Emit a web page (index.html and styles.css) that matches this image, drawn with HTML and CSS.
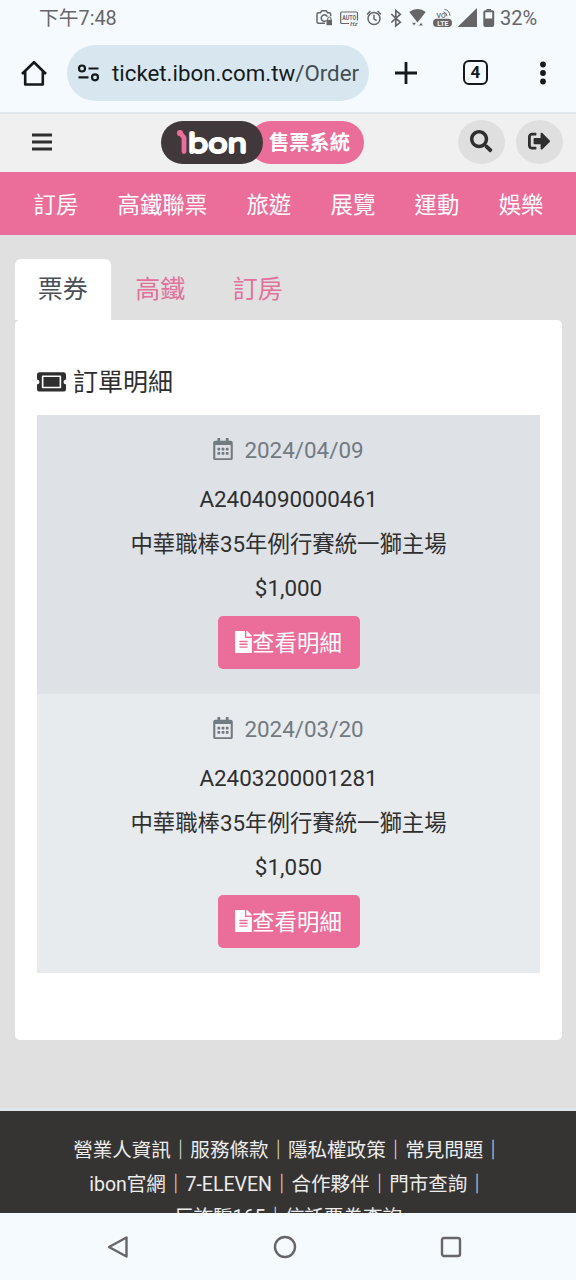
FILE: index.html
```html
<!DOCTYPE html>
<html lang="zh-Hant">
<head>
<meta charset="utf-8">
<title>ibon售票系統</title>
<link rel="stylesheet" href="styles.css">
</head>
<body>
<svg class="sprite" aria-hidden="true">
  <symbol id="calendar" viewBox="0 0 448 512"><path d="M148 288h-40c-6.600 0-12-5.400-12-12v-40c0-6.600 5.400-12 12-12h40c6.600 0 12 5.400 12 12v40c0 6.600-5.400 12-12 12zm108-12v-40c0-6.600-5.400-12-12-12h-40c-6.600 0-12 5.400-12 12v40c0 6.600 5.400 12 12 12h40c6.600 0 12-5.400 12-12zm96 0v-40c0-6.600-5.400-12-12-12h-40c-6.600 0-12 5.400-12 12v40c0 6.600 5.400 12 12 12h40c6.600 0 12-5.400 12-12zm-96 96v-40c0-6.600-5.400-12-12-12h-40c-6.600 0-12 5.400-12 12v40c0 6.600 5.400 12 12 12h40c6.600 0 12-5.400 12-12zm-96 0v-40c0-6.600-5.400-12-12-12h-40c-6.600 0-12 5.400-12 12v40c0 6.600 5.400 12 12 12h40c6.600 0 12-5.400 12-12zm192 0v-40c0-6.600-5.400-12-12-12h-40c-6.600 0-12 5.400-12 12v40c0 6.600 5.400 12 12 12h40c6.600 0 12-5.400 12-12zm96-260v352c0 26.500-21.500 48-48 48H48c-26.500 0-48-21.500-48-48V112c0-26.500 21.500-48 48-48h48V12c0-6.600 5.400-12 12-12h40c6.600 0 12 5.400 12 12v52h128V12c0-6.600 5.400-12 12-12h40c6.600 0 12 5.400 12 12v52h48c26.500 0 48 21.500 48 48zm-48 346V160H48v298c0 3.300 2.700 6 6 6h340c3.300 0 6-2.700 6-6z"/></symbol>
  <symbol id="file" viewBox="0 0 384 512"><path d="M224 136V0H24C10.700 0 0 10.700 0 24v464c0 13.300 10.700 24 24 24h336c13.300 0 24-10.700 24-24V160H248c-13.200 0-24-10.800-24-24zm64 236c0 6.600-5.400 12-12 12H108c-6.600 0-12-5.400-12-12v-8c0-6.600 5.400-12 12-12h168c6.600 0 12 5.400 12 12v8zm0-64c0 6.600-5.400 12-12 12H108c-6.600 0-12-5.400-12-12v-8c0-6.600 5.400-12 12-12h168c6.600 0 12 5.400 12 12v8zm0-72v8c0 6.600-5.400 12-12 12H108c-6.600 0-12-5.400-12-12v-8c0-6.600 5.400-12 12-12h168c6.600 0 12 5.400 12 12zm96-114.100v6.100H256V0h6.100c6.400 0 12.500 2.500 17 7l97.900 98c4.500 4.500 7 10.600 7 16.900z"/></symbol>
</svg>

<div class="status-bar">
  <span class="clock">下午7:48</span>
  <svg class="status-icons" viewBox="312 0 184 34" width="184" height="34" fill="none" stroke="#666" stroke-width="1.500">
    <path d="M325 22.300h-6.500a1.500 1.500 0 0 1-1.500-1.500v-7.600a1.500 1.500 0 0 1 1.500-1.500h2l1.300-2h4.400l1.300 2h1.700a1.500 1.500 0 0 1 1.500 1.500v2"/>
    <path d="M326.500 19.500a3.200 3.200 0 1 1 .8-3.800"/>
    <rect x="326.500" y="18.800" width="5.500" height="5.400" fill="#666" stroke="none"/>
    <path d="M327.600 19v-1.200a1.700 1.700 0 0 1 3.400 0V19" stroke-width="1"/>
    <path d="M349 22.500h-7.300a1 1 0 0 1-1-1V12a1 1 0 0 1 1-1h14.800a1 1 0 0 1 1 1v7.500" stroke-width="1.200"/>
    <g fill="#666" stroke="none" font-family="Roboto, sans-serif" font-weight="700">
      <text x="342.300" y="19" font-size="6.500" textLength="13.800" lengthAdjust="spacingAndGlyphs">AUTO</text>
      <text x="350.300" y="25.300" font-size="6" font-style="italic">Hz</text>
    </g>
    <circle cx="374" cy="17.500" r="6"/>
    <path d="M374 13.800v4l2.600 1.900M367 13.500l3.400-3.400M381 13.500l-3.400-3.400"/>
    <path d="M391.300 13l9 8.300-4.500 3.700V9.500l4.500 3.700-9 8.300" stroke-width="1.700"/>
    <path d="M409.300 11a12.500 12.500 0 0 1 16.400 0L417.500 21.500z" fill="#666" stroke="none"/>
    <path d="M411.500 21.500h5l-2.500 3.300zM418.500 24.800h5l-2.500-3.300z" fill="#666" stroke="#f5faff" stroke-width=".6"/>
    <rect x="433" y="17.800" width="19" height="8.200" rx="4" fill="#666" stroke="none"/>
    <g stroke="none" font-family="Roboto, sans-serif" font-weight="700">
      <text x="436.500" y="16.500" font-size="7" fill="#666" font-weight="500">VO</text>
      <text x="437.300" y="24.500" font-size="7" textLength="11" lengthAdjust="spacingAndGlyphs" fill="#f5faff">LTE</text>
    </g>
    <path d="M443.500 11a4.500 4.500 0 0 1 3.500 4.300M444.500 8.300a7 7 0 0 1 5.500 6.500" stroke-width="1"/>
    <path d="M477 7v19h-19.500z" fill="#666" stroke="none"/>
    <path d="M486.500 8h4.500v1.500h-4.500z" fill="#666" stroke="none"/>
    <path d="M485.300 10.300h6.900a1 1 0 0 1 1 1V24a1 1 0 0 1-1 1h-6.900a1 1 0 0 1-1-1V11.300a1 1 0 0 1 1-1z" stroke-width="2"/>
    <rect x="484" y="17.500" width="9.500" height="7.500" fill="#666" stroke="none"/>
  </svg>
  <span class="battery">32%</span>
</div>

<div class="browser-bar">
  <svg class="home" viewBox="0 0 28 28" width="28" height="28" fill="none" stroke="#15191c" stroke-width="2.600" stroke-linejoin="round"><path d="M2 15L14 3.200 26 15M5.200 12.500v13h17.600v-13"/></svg>
  <div class="address">
    <svg viewBox="0 0 24 20" width="24" height="20" fill="none" stroke="#15191c" stroke-width="2.200"><circle cx="5" cy="5.500" r="3"/><circle cx="18" cy="14.300" r="3"/><path d="M11.500 5.500h10M1.500 14.300h10"/></svg>
    <span class="url">ticket.ibon.com.tw<span class="path">/Order</span></span>
  </div>
  <svg class="plus" viewBox="0 0 24 24" width="24" height="24" stroke="#15191c" stroke-width="2.800"><path d="M12 1v22M1 12h22"/></svg>
  <span class="tab-count">4</span>
  <svg class="dots" viewBox="0 0 8 24" width="8" height="24" fill="#15191c"><circle cx="4" cy="3.500" r="2.900"/><circle cx="4" cy="12" r="2.900"/><circle cx="4" cy="20.500" r="2.900"/></svg>
</div>

<header class="site-header">
  <svg class="menu" viewBox="0 0 20 18" width="20" height="18" fill="#2f2f2f"><path d="M0 .5h20v3H0zM0 7.500h20v3H0zM0 14.500h20v3H0z"/></svg>
  <div class="logo">
    <div class="logo-name" aria-label="ibon">
      <svg viewBox="0 0 72 30" width="72" height="30">
        <circle cx="5" cy="5" r="3.100" fill="#eb6d99"/>
        <path d="M5 5L9 9.500V23.500" fill="none" stroke="#eb6d99" stroke-width="4.800" stroke-linecap="round" stroke-linejoin="bevel"/>
        <text x="13" y="25" textLength="59" lengthAdjust="spacingAndGlyphs" class="logo-text">bon</text>
      </svg>
    </div>
    <div class="logo-system">售票系統</div>
  </div>
  <div class="actions">
    <span class="round"><svg viewBox="0 0 512 512" width="22.400" height="22.400" fill="#2f2f2f"><path d="M505 442.700L405.300 343c-4.500-4.500-10.600-7-17-7H372c27.600-35.300 44-79.700 44-128C416 93.100 322.900 0 208 0S0 93.100 0 208s93.100 208 208 208c48.300 0 92.700-16.400 128-44v16.300c0 6.400 2.500 12.500 7 17l99.700 99.700c9.400 9.400 24.600 9.400 33.900 0l28.300-28.300c9.400-9.400 9.400-24.600.1-34zM208 336c-70.700 0-128-57.200-128-128 0-70.700 57.200-128 128-128 70.700 0 128 57.200 128 128 0 70.700-57.200 128-128 128z"/></svg></span>
    <span class="round"><svg viewBox="0 0 512 512" width="22.400" height="22.400" fill="#2f2f2f"><path d="M497 273L329 441c-15 15-41 4.500-41-17v-96H152c-13.300 0-24-10.700-24-24v-96c0-13.300 10.700-24 24-24h136V88c0-21.400 25.900-32 41-17l168 168c9.300 9.400 9.300 24.600 0 34zM192 436v-40c0-6.600-5.400-12-12-12H96c-17.700 0-32-14.300-32-32V160c0-17.700 14.300-32 32-32h84c6.600 0 12-5.400 12-12V76c0-6.600-5.400-12-12-12H96c-53 0-96 43-96 96v192c0 53 43 96 96 96h84c6.600 0 12-5.400 12-12z"/></svg></span>
  </div>
</header>

<nav class="categories">
  <a>訂房</a><a>高鐵聯票</a><a>旅遊</a><a>展覽</a><a>運動</a><a>娛樂</a>
</nav>

<main class="content">
  <div class="tabs"><a class="tab active">票券</a><a class="tab">高鐵</a><a class="tab">訂房</a></div>
  <section class="panel">
    <h1 class="title">
      <svg viewBox="0 0 576 512" width="29" height="25.800" fill="#2f2f2f"><path d="M128 160h320v192H128V160zm400 96c0 26.510 21.490 48 48 48v96c0 26.510-21.490 48-48 48H48c-26.510 0-48-21.490-48-48v-96c26.510 0 48-21.490 48-48s-21.490-48-48-48v-96c0-26.510 21.490-48 48-48h480c26.510 0 48 21.490 48 48v96c-26.510 0-48 21.490-48 48zm-48-104c0-13.255-10.745-24-24-24H120c-13.255 0-24 10.745-24 24v208c0 13.255 10.745 24 24 24h336c13.255 0 24-10.745 24-24V152z"/></svg>
      訂單明細
    </h1>
    <article class="order first">
      <div class="date"><svg class="calendar"><use href="#calendar"/></svg>2024/04/09</div>
      <div class="line">A2404090000461</div>
      <div class="line">中華職棒35年例行賽統一獅主場</div>
      <div class="line">$1,000</div>
      <a class="button"><svg class="file"><use href="#file"/></svg>查看明細</a>
    </article>
    <article class="order">
      <div class="date"><svg class="calendar"><use href="#calendar"/></svg>2024/03/20</div>
      <div class="line">A2403200001281</div>
      <div class="line">中華職棒35年例行賽統一獅主場</div>
      <div class="line">$1,050</div>
      <a class="button"><svg class="file"><use href="#file"/></svg>查看明細</a>
    </article>
  </section>
</main>

<footer class="site-footer">
  <div>營業人資訊｜服務條款｜隱私權政策｜常見問題｜</div>
  <div>ibon官網｜7-ELEVEN｜合作夥伴｜門市查詢｜</div>
  <div>反詐騙165｜信託票券查詢</div>
</footer>

<div class="system-nav">
  <svg viewBox="0 0 24 24" width="24" height="24" fill="none" stroke="#666" stroke-width="2.400" stroke-linejoin="round"><path d="M20.500 2.500v19L3 12z"/></svg>
  <svg viewBox="0 0 24 24" width="24" height="24" fill="none" stroke="#666" stroke-width="2.400"><circle cx="12" cy="12" r="10"/></svg>
  <svg viewBox="0 0 24 24" width="24" height="24" fill="none" stroke="#666" stroke-width="2.400"><rect x="3" y="3" width="18" height="18" rx="2"/></svg>
</div>
</body>
</html>
```
FILE: styles.css
```css
* { box-sizing: border-box; }

body {
  margin: 0;
  width: 576px;
  height: 1280px;
  display: flex;
  flex-direction: column;
  overflow: hidden;
  background: #e0e0e0;
  color: #2f2f2f;
  font: 22.4px/1.5 Roboto, "Noto Sans CJK TC", sans-serif;
}

svg { display: block; flex: none; }
.sprite { position: absolute; width: 0; height: 0; }

.status-bar {
  flex: none;
  height: 35px;
  padding-left: 39px;
  display: flex;
  align-items: center;
  background: #f5faff;
  color: #666;
  font-size: 19.8px;
}
.clock { width: 273px; padding-top: 2px; }
.battery { margin-left: 4px; font-size: 20px; }

.browser-bar {
  flex: none;
  height: 77px;
  padding: 0 0 2px 20px;
  display: flex;
  align-items: center;
  background: #f5faff;
}
.address {
  width: 302px;
  height: 56px;
  margin-left: 19px;
  padding-left: 10px;
  display: flex;
  align-items: center;
  border-radius: 28px;
  background: #d8e7ef;
}
.url {
  margin-left: 11px;
  padding-top: 3px;
  white-space: nowrap;
  color: #15191c;
  font-size: 22.3px;
}
.path { color: #444e54; }
.plus { margin-left: 24.500px; }
.tab-count {
  width: 25px;
  height: 25px;
  margin-left: 45.500px;
  border: 2.500px solid #15191c;
  border-radius: 6px;
  color: #15191c;
  font-size: 17px;
  font-weight: 700;
  line-height: 21px;
  text-align: center;
}
.dots { margin-left: 50.500px; }

.site-header {
  flex: none;
  height: 60px;
  padding: 0 13px 0 32px;
  display: flex;
  align-items: center;
  border-top: 2px solid #dfe6ec;
  background: #f0f0f0;
}
.menu { margin-top: -3px; }
.logo { display: flex; margin: -1px 0 0 109px; }
.logo-name {
  z-index: 1;
  width: 102px;
  height: 43px;
  padding: 7px 0 0 14px;
  border-radius: 22px;
  background: #40383a;
}
.logo-text {
  font: 700 29px "Varela Round", Lato, sans-serif;
  fill: #fff;
  stroke: #fff;
  stroke-width: 1.2px;
  stroke-linejoin: round;
}
.logo-system {
  width: 115px;
  height: 43px;
  margin-left: -14px;
  padding-left: 20px;
  border-radius: 22px;
  background: #eb6d99;
  color: #fff;
  font-size: 20.3px;
  font-weight: 700;
  line-height: 45px;
}
.actions { display: flex; gap: 11px; margin: -3px 0 0 auto; }
.round {
  width: 47px;
  height: 44px;
  display: flex;
  align-items: center;
  justify-content: center;
  border-radius: 50%;
  background: #dfdfdf;
}

.categories {
  flex: none;
  height: 63px;
  padding: 4px 32.5px 0 33.5px;
  display: flex;
  align-items: center;
  justify-content: space-between;
  background: #eb6d99;
  color: #fff;
}

.content {
  flex: none;
  height: 876px;
  padding: 24px 14px 0 15px;
  border-bottom: 3px solid #dfe6ec;
}
.tabs { display: flex; height: 61px; font-size: 25px; }
.tab {
  width: 97.5px;
  padding-top: 12px;
  text-align: center;
  color: #e1729b;
}
.tab.active {
  width: 95.500px;
  margin-right: 1px;
  border-radius: 6px 6px 0 0;
  background: #fff;
  color: #495057;
}
.panel {
  height: 720px;
  padding: 44px 22px 0;
  border-radius: 5px;
  background: #fff;
}
.title {
  height: 51px;
  margin: 0;
  display: flex;
  align-items: flex-start;
  gap: 7px;
  font-size: 25px;
  font-weight: 400;
}
.title svg { margin-top: 5px; }
.order {
  height: 279px;
  padding-top: 9px;
  display: flex;
  flex-direction: column;
  align-items: center;
  background: #e8ebee;
}
.order.first { background: #dee1e6; }
.date {
  height: 52px;
  padding-top: 1px;
  display: flex;
  align-items: center;
  color: #727a82;
}
.calendar { width: 20px; height: 22.4px; margin: -3px 11px 0 0; fill: currentColor; }
.line { height: 44.7px; line-height: 46px; }
.button {
  width: 142px;
  height: 53px;
  margin-top: 6px;
  padding-top: 2px;
  display: flex;
  align-items: center;
  justify-content: center;
  border-radius: 5px;
  background: #eb6d99;
  color: #fff;
}
.file { width: 17px; height: 22.4px; margin-top: -3px; fill: currentColor; }

.site-footer {
  flex: none;
  height: 102px;
  padding-top: 23px;
  overflow: hidden;
  background: #363433;
  color: #ececec;
  font-size: 19.55px;
  line-height: 33.500px;
  text-align: center;
  white-space: nowrap;
}

.system-nav {
  flex: 1;
  display: flex;
  align-items: center;
  justify-content: space-between;
  padding: 0 113px 0 106px;
  background: #f5faff;
}
```
